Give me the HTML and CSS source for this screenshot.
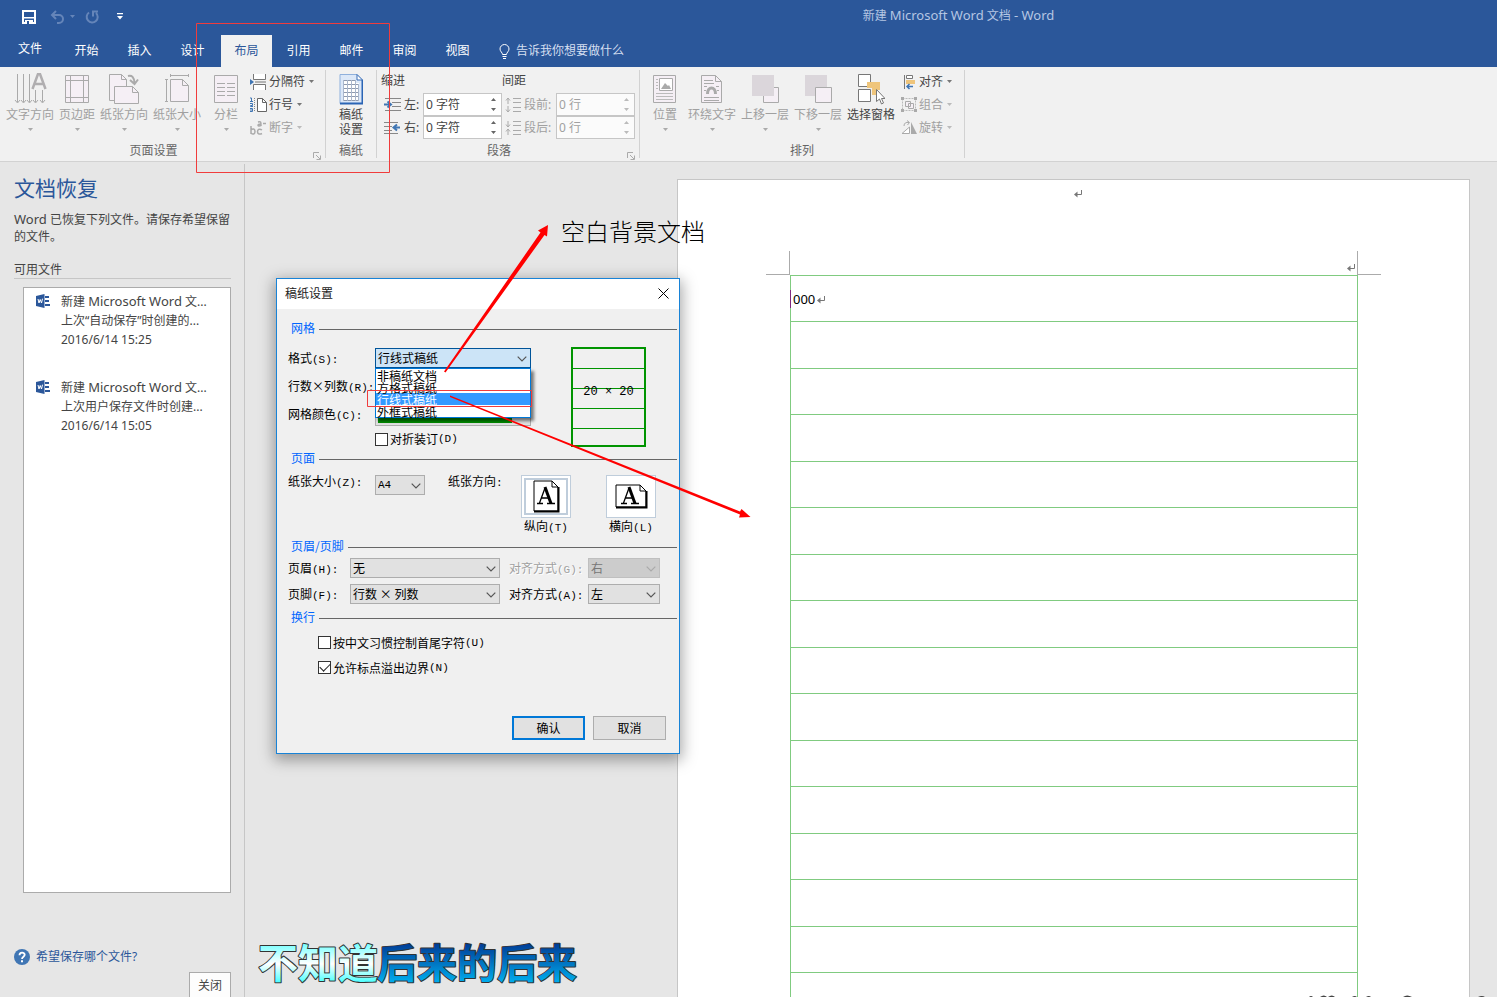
FILE: index.html
```html
<!DOCTYPE html>
<html lang="zh-CN">
<head>
<meta charset="utf-8">
<title>新建 Microsoft Word 文档 - Word</title>
<link rel="stylesheet" href="styles.css">
</head>
<body>
<svg class="defs" width="0" height="0" aria-hidden="true">
  <symbol id="caret" viewBox="0 0 5 3"><path d="M0 0h5L2.500 3z" fill="currentColor"/></symbol>
  <symbol id="chev" viewBox="0 0 10 6"><path d="M.7.7 5 5 9.300.7" fill="none" stroke="currentColor" stroke-width="1.200"/></symbol>
  <symbol id="launch" viewBox="0 0 8 8"><path d="M.5 6V.5H6M3 3l4 4M7.500 3.500v4h-4" fill="none" stroke="#aaa"/></symbol>
  <symbol id="spin" viewBox="0 0 5 13"><path d="M0 3h5L2.500 0zM0 10h5L2.500 13z" fill="currentColor"/></symbol>
  <symbol id="enter" viewBox="0 0 8 8"><path d="M7.500 0v4.500H2" fill="none" stroke="#777"/><path d="M0 4.500 3.500 1.500v6z" fill="#777"/></symbol>
  <symbol id="word" viewBox="0 0 15 14"><path d="M0 2 8.500 0v14L0 12z" fill="#2b579a"/><path d="M9 2h4v2H9zM9 6h4v2H9zM9 10h5v2H9z" fill="#2b579a"/><path d="M2 5l1 4 1.200-3.500L5.500 9l1-4.300" fill="none" stroke="#fff"/></symbol>
</svg>

<header class="top">
  <div class="titlebar">
    <div class="quick">
      <button aria-label="保存"><svg width="14" height="14" viewBox="0 0 14 14"><path d="M1 1h12v12H1z" fill="none" stroke="#fff" stroke-width="2"/><path d="M1 7h12v1.500H1zM3 10h8v4H3z" fill="#fff"/><path d="M5 11h2v3H5z" fill="#2b579a"/></svg></button>
      <button aria-label="撤消" class="dim undo"><svg width="15" height="14" viewBox="0 0 15 14"><path d="M2 5h7a4 4 0 0 1 0 8H7M6 1 2 5l4 4" fill="none" stroke="currentColor" stroke-width="2"/></svg><svg width="5" height="3"><use href="#caret"/></svg></button>
      <button aria-label="重复" class="dim"><svg width="14" height="14" viewBox="0 0 14 14"><path d="M4 2.500A5.500 5.500 0 1 0 11 3M8 6.500V1.500h5" fill="none" stroke="currentColor" stroke-width="2"/></svg></button>
      <button aria-label="自定义快速访问工具栏"><svg width="6" height="7" viewBox="0 0 6 7"><path d="M0 0h6v1.300H0zM0 3h6L3 6.500z" fill="#fff"/></svg></button>
    </div>
    <h1 class="apptitle">新建 <span class="lat">Microsoft Word</span> 文档 <span class="lat">- Word</span></h1>
  </div>
  <nav class="tabs">
    <button class="file">文件</button>
    <button>开始</button><button>插入</button><button>设计</button>
    <button class="active">布局</button>
    <button>引用</button><button>邮件</button><button>审阅</button><button>视图</button>
    <button class="tell"><svg width="11" height="15" viewBox="0 0 11 15"><path d="M3.500 10.500C3.500 8.500 1 7.500 1 5a4.500 4.500 0 0 1 9 0c0 2.500-2.500 3.500-2.500 5.500zM3.500 12.500h4M4 14.500h3" fill="none" stroke="#fff"/></svg>告诉我你想要做什么</button>
  </nav>
</header>

<section class="ribbon">
  <div class="group setup">
    <div class="tools">
      <button class="big off"><svg width="33" height="32" viewBox="0 0 33 32"><path d="M3.500 1v28M9.500 1v28M15.500 1v28M21.500 17v12M28.500 17v12M1 27l2.500 3L6 27M7 27l2.500 3 2.500-3M13 27l2.500 3 2.500-3M19 27l2.500 3 2.500-3M26 27l2.500 3 2.500-3" fill="none" stroke="#aaa"/><path d="M18.500 16 24 1h2l5.500 15M20.500 11h9" fill="none" stroke="#b0aeb0" stroke-width="2.500"/></svg><span>文字方向</span><svg width="5" height="3"><use href="#caret"/></svg></button>
      <button class="big off"><svg width="24" height="32" viewBox="0 0 24 32"><path d="M.5 2.500h23v27H.5z" fill="#f5eff5" stroke="#aaa"/><path d="M5.500 2v28M18.500 2v28M0 7.500h24M0 24.500h24" stroke="#aaa"/></svg><span>页边距</span><svg width="5" height="3"><use href="#caret"/></svg></button>
      <button class="big off"><svg width="30" height="32" viewBox="0 0 30 32"><path d="M.5 1.500h12l5 5v21H.5z" fill="#f5eff5" stroke="#aaa"/><path d="M12.500 1.500v5h5" fill="none" stroke="#aaa"/><path d="M5.500 13.500h18l6 6v11h-24z" fill="#f5eff5" stroke="#aaa"/><path d="M23.500 13.500v6h6" fill="none" stroke="#aaa"/><path d="M19 3c4-1 6 1 6.500 7M21 7l4.500 4L29 6.500" fill="none" stroke="#aaa" stroke-width="2"/></svg><span>纸张方向</span><svg width="5" height="3"><use href="#caret"/></svg></button>
      <button class="big off"><svg width="26" height="32" viewBox="0 0 26 32"><path d="M6.500 6.500h12l6 6v16h-18z" fill="#f5eff5" stroke="#aaa"/><path d="M18.500 6.500v6h6M6 2.500h19M6.500 1v3M24.500 1v3M2.500 6v23M1 6.500h3M1 28.500h3" fill="none" stroke="#aaa"/></svg><span>纸张大小</span><svg width="5" height="3"><use href="#caret"/></svg></button>
      <button class="big off columns"><svg width="24" height="32" viewBox="0 0 24 32"><path d="M.5 2.500h23v27H.5z" fill="#f5eff5" stroke="#aaa"/><path d="M3 10.500h8M3 14.500h8M3 18.500h8M3 22.500h8M13 10.500h8M13 14.500h8M13 18.500h8M13 22.500h8" stroke="#aaa"/></svg><span>分栏</span><svg width="5" height="3"><use href="#caret"/></svg></button>
      <div class="smalls">
        <button><svg width="17" height="16" viewBox="0 0 17 16"><path d="M3.500 0v5.500h12V0M3.500 16v-5.500h12V16" fill="#fff" stroke="#777"/><path d="M5 8h11" stroke="#777"/><path d="M0 5l4 3-4 3z" fill="#4076b4"/></svg>分隔符<svg width="5" height="3"><use href="#caret"/></svg></button>
        <button><svg width="17" height="16" viewBox="0 0 17 16"><path d="M7.500 1.500h5l4 4v9h-9z" fill="#fff" stroke="#666"/><path d="M12.500 1.500v4h4" fill="none" stroke="#666"/><path d="M0 1h1.500v3M0 4.500h3M0 6.500h2.500v2H.5v1h2.500M0 11.500h2.500v3H0M0 13h2" fill="none" stroke="#4076b4"/><path d="M4.500 1v14" stroke="#888" stroke-dasharray="1 1"/></svg>行号<svg width="5" height="3"><use href="#caret"/></svg></button>
        <button class="off"><svg width="17" height="16" viewBox="0 0 17 16"><path d="M1 6v8M1 10c2-2 4-1 4 1.500S3 15 1 13M12 10c-3-2-4.500 0-4.500 1.700S9 15 12 13.500M8 2c3-1 3 0 3 4M11 4c-4 0-4 3 0 1.500M13 3.500h3" fill="none" stroke="#aaa" stroke-width="1.500"/></svg>断字<svg width="5" height="3"><use href="#caret"/></svg></button>
      </div>
    </div>
    <div class="caption">页面设置<svg width="8" height="8"><use href="#launch"/></svg></div>
  </div>

  <div class="group grid-paper">
    <div class="tools">
      <button class="big"><svg width="24" height="32" viewBox="0 0 24 32"><path d="M1 1.500h17l5.500 5.500v23.500H1z" fill="#dce8f8" stroke="#8fb0dc"/><path d="M1 30.500h22.500V7" fill="none" stroke="#2b65b5" stroke-width="2"/><path d="M4 7h12v3h4v18H4z" fill="#fff"/><path d="M18 1.500V7h5.500z" fill="#fff" stroke="#3b6fb6"/><path d="M4 7.500h13M4 11.500h16M4 15.500h16M4 19.500h16M4 23.500h16M4 27.500h16" stroke="#8f9aae"/><path d="M4.500 7v21M8.500 7v21M12.500 7v21M16.500 7v21M19.500 11v17" stroke="#aab7cd"/></svg><span>稿纸</span><span>设置</span></button>
    </div>
    <div class="caption">稿纸</div>
  </div>

  <div class="group paragraph">
    <div class="tools">
      <div class="fields">
        <b>缩进</b>
        <div><label for="il"><svg width="17" height="14" viewBox="0 0 17 14"><path d="M1 .5h16M8 4.500h9M8 8.500h9M1 12.500h16" stroke="#888"/><path d="M0 6.500h6M3.500 3.500l3.500 3-3.500 3" fill="none" stroke="#4076b4" stroke-width="2"/></svg>左:</label><span class="spin"><input id="il" value="0 字符"><svg width="5" height="13"><use href="#spin"/></svg></span></div>
        <div><label for="ir"><svg width="17" height="14" viewBox="0 0 17 14"><path d="M0 1.500h14M0 5.500h8M0 9.500h8M0 12.500h14" stroke="#888"/><path d="M16 6.500h-5M13 3.500l-3.500 3 3.500 3" fill="none" stroke="#4076b4" stroke-width="2"/></svg>右:</label><span class="spin"><input id="ir" value="0 字符"><svg width="5" height="13"><use href="#spin"/></svg></span></div>
      </div>
      <div class="fields off">
        <b>间距</b>
        <div><label for="sb"><svg width="16" height="16" viewBox="0 0 16 16"><path d="M3 7V1M1 3.500 3 1l2 2.500M3 9v6M1 12.500 3 15l2-2.500" fill="none" stroke="#aaa"/><path d="M8 1.500h8M8 5.500h8M8 10.500h8M8 14.500h8" stroke="#aaa"/></svg>段前:</label><span class="spin"><input id="sb" value="0 行" disabled><svg width="5" height="13"><use href="#spin"/></svg></span></div>
        <div><label for="sa"><svg width="16" height="16" viewBox="0 0 16 16"><path d="M3 1v6M1 4.500 3 7l2-2.500M3 15V9M1 11.500 3 9l2 2.500" fill="none" stroke="#aaa"/><path d="M8 1.500h8M8 5.500h8M8 10.500h8M8 14.500h8" stroke="#aaa"/></svg>段后:</label><span class="spin"><input id="sa" value="0 行" disabled><svg width="5" height="13"><use href="#spin"/></svg></span></div>
      </div>
    </div>
    <div class="caption">段落<svg width="8" height="8"><use href="#launch"/></svg></div>
  </div>

  <div class="group arrange">
    <div class="tools">
      <button class="big off"><svg width="24" height="32" viewBox="0 0 24 32"><path d="M.5 2.500h22v27H.5z" fill="#f5eff5" stroke="#aaa"/><path d="M6.500 5.500h13v12h-13z" fill="#fff" stroke="#aaa"/><path d="M8 16l4-6 3 3 1-1 2 4z" fill="#aaa"/><path d="M3 6.500h2M3 9.500h2M3 12.500h2M3 15.500h2M3 20.500h17M3 23.500h17M3 26.500h17" stroke="#bbb"/></svg><span>位置</span><svg width="5" height="3"><use href="#caret"/></svg></button>
      <button class="big off"><svg width="22" height="32" viewBox="0 0 22 32"><path d="M.5 2.500h14l6 6v21H.5z" fill="#f5eff5" stroke="#aaa"/><path d="M14.500 2.500v6h6M3 7.500h9M3 10.500h10M3 13.500h3M15 13.500h3M3 17.500h2M16 17.500h2M3 24.500h15M3 27.500h15" fill="none" stroke="#aaa"/><path d="M6.500 21c0-8 8-8 8 0" fill="none" stroke="#aaa" stroke-width="3"/></svg><span>环绕文字</span><svg width="5" height="3"><use href="#caret"/></svg></button>
      <button class="big off"><svg width="27" height="32" viewBox="0 0 27 32"><path d="M11.500 14.500h15v15h-15z" fill="#f5eff5" stroke="#aaa"/><path d="M0 2h22v21H0z" fill="#dbd6db"/></svg><span>上移一层</span><svg width="5" height="3"><use href="#caret"/></svg></button>
      <button class="big off"><svg width="27" height="32" viewBox="0 0 27 32"><path d="M0 2h22v21H0z" fill="#dbd6db"/><path d="M10.500 14.500h16v15h-16z" fill="#f5eff5" stroke="#aaa"/></svg><span>下移一层</span><svg width="5" height="3"><use href="#caret"/></svg></button>
      <button class="big"><svg width="27" height="32" viewBox="0 0 27 32"><path d="M.5 1.500h12v12H.5zM.5 16.500h12v12H.5z" fill="#fff" stroke="#777"/><path d="M9 9h13v8h-4v5h-4v-7H9z" fill="#efc57b"/><path d="M18.500 16.500v12l3-2.500 2 5 2-1-2-4.500h3.500z" fill="#fff" stroke="#777"/></svg><span>选择窗格</span></button>
      <div class="smalls">
        <button><svg width="16" height="16" viewBox="0 0 16 16"><path d="M3.500 1v14" stroke="#777"/><path d="M5.500 1.500h6v3h-6z" fill="#fff" stroke="#777"/><path d="M5 6h9v4H5z" fill="#efc57b"/><path d="M12 12.500H6M8.500 10 6 12.500 8.500 15" fill="none" stroke="#4076b4" stroke-width="1.500"/></svg>对齐<svg width="5" height="3"><use href="#caret"/></svg></button>
        <button class="off"><svg width="16" height="16" viewBox="0 0 16 16"><path d="M1.500 1.500h13v12h-13z" fill="none" stroke="#bbb" stroke-dasharray="2 1"/><path d="M4.500 4.500h5v5h-5zM7.500 6.500h5v5h-5z" fill="#f5eff5" stroke="#aaa"/><path d="M0 0h3v3H0zM13 0h3v3h-3zM0 12h3v3H0zM13 12h3v3h-3z" fill="#aaa"/></svg>组合<svg width="5" height="3"><use href="#caret"/></svg></button>
        <button class="off"><svg width="16" height="16" viewBox="0 0 16 16"><path d="M1 13.500 8.500 7v6.500z" fill="#fff" stroke="#aaa"/><path d="M10 2l6 12h-6z" fill="#aaa"/><path d="M3 6c0-3 2-4 5-3.500M6 .500 8.500 2.500 6.500 5" fill="none" stroke="#aaa"/></svg>旋转<svg width="5" height="3"><use href="#caret"/></svg></button>
      </div>
    </div>
    <div class="caption">排列</div>
  </div>
</section>

<main class="work">
  <aside class="recovery">
    <h2>文档恢复</h2>
    <p><span class="lat">Word</span> 已恢复下列文件。请保存希望保留的文件。</p>
    <h3>可用文件</h3>
    <ul class="files">
      <li><svg width="15" height="14"><use href="#word"/></svg><div>新建 <span class="lat">Microsoft Word</span> 文...<br>上次“自动保存”时创建的...<br>2016/6/14 15:25</div></li>
      <li><svg width="15" height="14"><use href="#word"/></svg><div>新建 <span class="lat">Microsoft Word</span> 文...<br>上次用户保存文件时创建...<br>2016/6/14 15:05</div></li>
    </ul>
    <footer>
      <a href="#"><svg width="16" height="16" viewBox="0 0 16 16"><circle cx="8" cy="8" r="8" fill="#4076b4"/><path d="M5.500 6.200c0-3.500 5.200-3.200 5.200-.4C10.700 7.700 8 7.700 8 10" fill="none" stroke="#fff" stroke-width="1.800"/><path d="M7 11.200h2v2H7z" fill="#fff"/></svg>希望保存哪个文件?</a>
      <button>关闭</button>
    </footer>
  </aside>

  <div class="canvas">
    <article class="page">
      <div class="pagehead"><svg width="8" height="8"><use href="#enter"/></svg></div>
      <div class="margins"><i class="corner left"></i><svg width="8" height="8"><use href="#enter"/></svg><i class="corner right"></i></div>
      <div class="sheet">
        <div class="line first"><span>000</span><svg width="8" height="8"><use href="#enter"/></svg></div>
        <div class="line"></div><div class="line"></div><div class="line"></div><div class="line"></div><div class="line"></div><div class="line"></div><div class="line"></div><div class="line"></div><div class="line"></div><div class="line"></div><div class="line"></div><div class="line"></div><div class="line"></div><div class="line"></div><div class="line"></div>
      </div>
    </article>

    <form class="dialog" onsubmit="return false">
      <div class="dtitle">稿纸设置<button type="button" aria-label="关闭窗口"><svg width="11" height="11" viewBox="0 0 11 11"><path d="M.5.5l10 10M10.500.5l-10 10" stroke="#000"/></svg></button></div>

      <h4>网格</h4>
      <div class="gridset">
        <div class="rows">
          <div class="row"><label for="fmt">格式<span class="m">(S):</span></label>
            <div class="combo hot"><select id="fmt"><option>行线式稿纸</option></select><svg width="10" height="6"><use href="#chev"/></svg>
              <ul class="drop"><li>非稿纸文档</li><li>方格式稿纸</li><li class="sel">行线式稿纸</li><li>外框式稿纸</li></ul>
            </div></div>
          <div class="row"><span>行数×列数<span class="m">(R):</span></span></div>
          <div class="row"><label for="color">网格颜色<span class="m">(C):</span></label><button id="color" type="button" class="swatch"><i></i></button></div>
          <div class="row fold"><label class="check"><input type="checkbox">对折装订<span class="m">(D)</span></label></div>
        </div>
        <div class="preview"><i></i><i></i><i></i><i></i><i></i><span class="m">20 × 20</span></div>
      </div>

      <h4>页面</h4>
      <div class="pageset">
        <label for="size">纸张大小<span class="m">(Z):</span></label>
        <div class="combo"><select id="size" class="m"><option>A4</option></select><svg width="10" height="6"><use href="#chev"/></svg></div>
        <span class="dirlabel">纸张方向<span class="m">:</span></span>
        <button type="button" class="orient on"><span><svg width="27" height="33" viewBox="0 0 27 33"><path d="M1 1h18l6 6v24H1z" fill="#fff" stroke="#000"/><path d="M25.500 7v24.500H1" fill="none" stroke="#000" stroke-width="2"/><path d="M19 1v6h6" fill="none" stroke="#000"/><path d="M4 23.500h6M14 23.500h8M6.500 23 12 8M8 18h8" fill="none" stroke="#000" stroke-width="1.300"/><path d="M12 7l6 16.500" stroke="#000" stroke-width="3"/></svg></span>纵向<span class="m">(T)</span></button>
        <button type="button" class="orient"><span><svg width="33" height="25" viewBox="0 0 33 25"><path d="M1 1h24l6 6v16H1z" fill="#fff" stroke="#000"/><path d="M31.500 7v16.500H1" fill="none" stroke="#000" stroke-width="2"/><path d="M25 1v6h6" fill="none" stroke="#000"/><path d="M6 19.500h6M16 19.500h8M8.500 19 14 4M10 14h8" fill="none" stroke="#000" stroke-width="1.300"/><path d="M14 3l6 16.500" stroke="#000" stroke-width="3"/></svg></span>横向<span class="m">(L)</span></button>
      </div>

      <h4>页眉/页脚</h4>
      <div class="hf">
        <label for="hd">页眉<span class="m">(H):</span></label>
        <div class="combo"><select id="hd"><option>无</option></select><svg width="10" height="6"><use href="#chev"/></svg></div>
        <label for="ha" class="grey">对齐方式<span class="m">(G):</span></label>
        <div class="combo dis"><select id="ha" disabled><option>右</option></select><svg width="10" height="6"><use href="#chev"/></svg></div>
        <label for="ft">页脚<span class="m">(F):</span></label>
        <div class="combo"><select id="ft"><option>行数 × 列数</option></select><svg width="10" height="6"><use href="#chev"/></svg></div>
        <label for="fa">对齐方式<span class="m">(A):</span></label>
        <div class="combo"><select id="fa"><option>左</option></select><svg width="10" height="6"><use href="#chev"/></svg></div>
      </div>

      <h4>换行</h4>
      <div class="wrapset">
        <label class="check"><input type="checkbox">按中文习惯控制首尾字符<span class="m">(U)</span></label>
        <label class="check"><input type="checkbox" checked>允许标点溢出边界<span class="m">(N)</span></label>
      </div>
      <div class="actions"><button class="ok">确认</button><button type="button">取消</button></div>
    </form>
  </div>
</main>

<svg class="notes" width="1497" height="997" viewBox="0 0 1497 997">
  <defs>
    <linearGradient id="pale" x1="0" y1="0" x2="0" y2="1"><stop offset=".2" stop-color="#7ff"/><stop offset=".55" stop-color="#fff"/><stop offset=".85" stop-color="#5ff"/></linearGradient>
    <linearGradient id="deep" x1="0" y1="0" x2="0" y2="1"><stop offset=".2" stop-color="#003c96"/><stop offset=".85" stop-color="#00aaeb"/></linearGradient>
  </defs>
  <path d="M196.500 23.500h193v149h-193zM367.500 390.500h164v16h-164z" fill="none" stroke="#f03c3c"/>
  <path d="M444 371.500 540.500 232.500 538 230.500 548 225 547 236.500 544.500 235 445.500 372.500z" fill="#f00"/>
  <path d="M450 395.500 740 511.500 741.500 509 750.500 517 739 517.500 740 514.500 450 397z" fill="#f00"/>
  <text x="561" y="241" class="note">空白背景文档</text>
  <text x="258" y="978" class="lyric" fill="url(#pale)">不知道</text>
  <text x="377" y="978" class="lyric" fill="url(#deep)">后来的后来</text>
  <path d="M1309 997q2-2 4 0zM1320 997q4-3 7 0zM1328 997q4-3 7 0zM1352 997q3-2 5 0zM1366 997q3-2 5 0zM1403 997q4-3 9 0zM1478 997q4-2 7 0z" fill="#444"/>
</svg>
</body>
</html>
```

FILE: styles.css
```css
* { box-sizing: border-box; }
html, body { height: 100%; }
body {
  margin: 0;
  display: flex;
  flex-direction: column;
  overflow: hidden;
  position: relative;
  background: #e6e6e6;
  color: #444;
  font: 12px/16px "Noto Sans", "Noto Sans CJK SC", sans-serif;
}
button, input, select { font: inherit; color: inherit; margin: 0; padding: 0; border: 0; background: none; border-radius: 0; }
h1, h2, h3, h4, p, ul { margin: 0; padding: 0; font-weight: normal; font-size: 12px; list-style: none; }
svg { flex: none; display: block; }
.defs { position: absolute; }
.lat { font-size: 13px; }

/* title bar and tabs */
.top { background: #2b579a; color: #fff; flex: none; }
.titlebar { display: flex; height: 35px; }
.quick { display: flex; align-items: center; gap: 10px; width: 420px; height: 33px; padding-left: 22px; }
.quick button { display: flex; align-items: center; gap: 5px; }
.quick .undo { margin-left: 4px; }
.quick button:last-child { margin-left: 8px; }
.dim { color: #6585b9; }
.apptitle { flex: 1; text-align: center; line-height: 30px; color: #b5c6e3; }
.tabs { display: flex; height: 32px; }
.tabs button { width: 53px; padding: 0; line-height: 30px; }
.tabs .file { width: 60px; line-height: 26px; padding-bottom: 4px; }
.tabs .active { background: #f1f1f1; color: #2b579a; width: 51px; margin-left: 2px; }
.tabs .tell { width: auto; display: flex; align-items: center; gap: 6px; padding-left: 15px; color: #d5dff0; }

/* ribbon */
.ribbon { display: flex; height: 95px; flex: none; background: #f1f1f1; border-bottom: 1px solid #d2d2d2; padding-top: 3px; }
.group { display: flex; flex-direction: column; height: 88px; border-right: 1px solid #d2d2d2; }
.setup { width: 326px; }
.grid-paper { width: 51px; }
.paragraph { width: 263px; }
.arrange { width: 325px; }
.tools { display: flex; height: 70px; flex: none; gap: 5px; padding-left: 6px; }
.big { display: flex; flex-direction: column; align-items: center; padding-top: 3px; height: 70px; line-height: 15px; }
.big span { white-space: nowrap; }
.big svg + span { margin-top: 2px; }
.big span + svg { margin-top: 6px; color: #aaa; }
.off { color: #a0a0a0; }
.columns { margin-left: 8px; }
.smalls { display: flex; flex-direction: column; margin-left: 7px; }
.smalls button { display: flex; align-items: center; height: 23px; gap: 2px; white-space: nowrap; }
.smalls svg:last-child { color: #777; margin-left: 2px; }
.smalls .off svg:last-child { color: #bbb; }
.caption { position: relative; text-align: center; line-height: 22px; padding-right: 18px; color: #666; }
.caption svg { position: absolute; right: 4px; bottom: 2px; }
.grid-paper .tools { padding-left: 13px; }
.grid-paper .caption { padding-right: 0; }
.paragraph .tools { padding-left: 4px; gap: 0; }
.fields { display: flex; flex-direction: column; }
.fields b { font-weight: normal; line-height: 22px; color: #444; height: 23px; }
.fields > div { display: flex; height: 23px; align-items: center; }
.fields label { display: flex; align-items: center; gap: 3px; width: 42px; padding-left: 3px; }
.fields.off label { width: 54px; }
.spin { position: relative; display: block; color: #666; }
.spin input { display: block; width: 79px; height: 23px; border: 1px solid #c6c6c6; background: #fff; padding: 0 0 2px 2px; color: #444; }
.off .spin input { color: #a0a0a0; background: #fbfbfb; }
.off .spin { color: #bbb; }
.spin svg { position: absolute; right: 6px; top: 5px; }
.arrange .tools { padding-left: 13px; }
.arrange .big:first-child { margin-right: 6px; }
.arrange .smalls { margin-left: 1px; }
.arrange .caption { padding-right: 0; }

/* recovery pane */
.work { flex: 1; display: flex; min-height: 0; isolation: isolate; }
.recovery { width: 245px; flex: none; display: flex; flex-direction: column; border-right: 1px solid #c6c6c6; padding: 11px 13px 0 14px; margin-top: 2px; }
.recovery h2 { font-size: 21px; line-height: 26px; color: #2b579a; }
.recovery p { line-height: 17px; margin-top: 10px; }
.recovery h3 { line-height: 17px; margin-top: 16px; border-bottom: 1px solid #c6c6c6; }
.files { flex: 1; min-height: 0; margin: 8px 0 0 9px; background: #fff; border: 1px solid #ababab; padding: 4px 12px; }
.files li { display: flex; gap: 10px; line-height: 19px; margin-bottom: 29px; white-space: nowrap; }
.files svg { margin-top: 2px; }
.recovery footer { height: 104px; flex: none; display: flex; flex-direction: column; overflow: hidden; padding-top: 56px; }
.recovery a { display: flex; align-items: center; gap: 6px; color: #2b579a; text-decoration: none; }
.recovery footer button { flex: none; align-self: flex-end; margin-top: 7px; width: 42px; height: 28px; background: #fdfdfd; border: 1px solid #ababab; }

/* document */
.canvas { flex: 1; position: relative; min-width: 0; padding: 17px 27px 0 432px; overflow: hidden; display: flex; }
.page { flex: 1; background: #fff; border: 1px solid #c6c6c6; border-bottom: 0; }
.pagehead { height: 71px; padding: 10px 0 0 8px; display: flex; justify-content: center; }
.margins { display: flex; height: 24px; align-items: flex-end; padding: 0 88px; }
.margins svg { margin: 0 2px 3px auto; }
.corner { width: 24px; height: 24px; border-bottom: 1px solid #ababab; }
.left { border-right: 1px solid #ababab; }
.right { border-left: 1px solid #ababab; }
.sheet { margin: 0 111px 0 112px; border: 1px solid #80cb80; }
.line { height: 47px; border-bottom: 1px solid #80cb80; }
.line:nth-child(odd) { height: 46px; }
.first { display: flex; align-items: center; gap: 2px; color: #000; font-size: 13px; margin-left: -1px; }
.first span { border-left: 1px solid #80287f; padding-left: 2px; line-height: 18px; }
.first svg { margin-top: 3px; }

/* dialog */
.dialog {
  position: absolute; left: 31px; top: 116px; width: 404px;
  background: #f0f0f0; border: 1px solid #1883d7; color: #000;
  box-shadow: 0 4px 14px 2px rgba(0,0,0,.35);
  font: 12px/16px "Noto Sans CJK SC", sans-serif;
}
.m { font-family: "Liberation Mono", monospace; font-size: 11px; line-height: 12px; }
.dtitle { display: flex; justify-content: space-between; align-items: center; height: 30px; padding: 0 10px 2px 8px; background: #fff; color: #222; }
.dialog h4 { display: flex; align-items: center; gap: 4px; padding: 0 2px 0 14px; color: #06f; line-height: 16px; }
.dialog h4::after { content: ""; flex: 1; height: 1px; margin-top: 2px; background: #666; }
.dtitle + h4 { margin-top: 11px; }
.gridset { display: flex; justify-content: space-between; padding: 8px 33px 0 11px; }
.row { display: grid; grid-template-columns: 87px 156px; align-items: center; height: 28px; white-space: nowrap; }
.row.fold { height: 22px; }
.fold .check { grid-column: 2; }
.combo { position: relative; height: 20px; flex: none; }
.combo select { appearance: none; display: block; width: 100%; height: 20px; border: 1px solid #adadad; background: #e1e1e1; padding: 0 0 0 2px; }
.combo > svg { position: absolute; right: 4px; top: 8px; color: #555; pointer-events: none; }
.hot select { background: #cce4f7; border-color: #005499; }
.dis select { background: #ccc; border-color: #bfbfbf; color: #777; opacity: 1; }
.dis > svg { color: #aaa; }
.drop { position: absolute; z-index: 2; left: 0; right: 0; top: 20px; background: #fff; border: 1px solid #0078d7; box-shadow: 3px 3px 3px rgba(0,0,0,.5); }
.drop li { height: 12px; line-height: 13px; padding-left: 1px; }
.drop .sel { background: #39f; color: #fff; }
.swatch { height: 24px; border: 1px solid #adadad; background: #e1e1e1; padding: 2px 18px 2px 2px; display: flex; }
.swatch i { flex: 1; height: 18px; background: #009000; }
.preview { position: relative; width: 75px; height: 100px; margin-top: 3px; border: 2px solid #009400; }
.preview i { display: block; height: 20px; border-bottom: 1px solid #009400; }
.preview i:last-of-type { border: 0; }
.preview span { position: absolute; left: 0; right: 0; top: 37px; text-align: center; white-space: nowrap; font-size: 12px; }
.check { display: flex; align-items: center; white-space: nowrap; }
.check input { appearance: none; width: 13px; height: 13px; margin-right: 2px; border: 1px solid #333; background: #fff; }
.check input:checked::after { content: ""; display: block; width: 9px; height: 5px; margin: 1px; border: solid #222; border-width: 0 0 1px 1px; transform: rotate(-45deg); }
.pageset { display: flex; align-items: flex-start; padding: 9px 23px 0 11px; line-height: 12px; white-space: nowrap; height: 72px; }
.pageset > label { flex: none; width: 87px; }
.pageset .combo { width: 50px; }
.dirlabel { flex: 1; margin-left: 23px; }
.orient { width: 50px; flex: none; line-height: 16px; }
.orient + .orient { margin-left: 35px; }
.orient > span:first-child { display: flex; align-items: center; justify-content: center; height: 43px; background: #fff; border: 1px solid #bfcddb; }
.orient.on > span:first-child { outline: 2px solid #bfcddb; outline-offset: -5px; }
.hf { display: grid; grid-template-columns: 62px 150px 88px 72px; grid-auto-rows: 26px; align-items: center; padding: 1px 0 2px 11px; white-space: nowrap; }
.hf label:nth-of-type(even) { padding-left: 9px; }
.hf .grey { color: #a0a0a0; text-shadow: 1px 1px #fff; }
.wrapset { display: grid; grid-auto-rows: 25px; padding: 5px 0 0 41px; }
.actions { display: flex; justify-content: flex-end; gap: 8px; padding: 36px 13px 13px; }
.actions button { width: 73px; height: 24px; border: 1px solid #adadad; background: #e1e1e1; }
.actions .ok { border: 2px solid #0078d7; }

/* arrows, frames and captions drawn over the window */
.notes { position: absolute; z-index: 5; left: 0; top: 0; pointer-events: none; }
.note { font: 300 24px "Noto Sans CJK SC", sans-serif; fill: #000; }
.lyric { font: bold 40px "Noto Sans CJK SC", sans-serif; stroke: #333; stroke-width: 2px; paint-order: stroke; stroke-linejoin: round; }
```
